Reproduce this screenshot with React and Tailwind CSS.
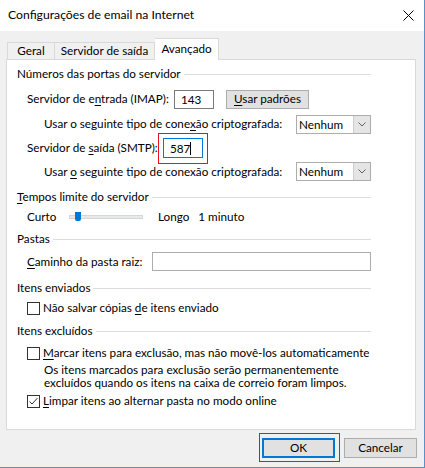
import React from 'react';

const font = { fontFamily: 'Lato, "Noto Sans", sans-serif' };

const U = ({ children }) => <span className="underline underline-offset-2">{children}</span>;

const GroupHeading = ({ children, className = '' }) => (
  <div className={`flex items-center h-[20px] pl-[10px] pr-[44px] ${className}`}>
    <span className="whitespace-nowrap">{children}</span>
    <div className="flex-1 ml-[3px] h-px bg-[#dcdcdc]" />
  </div>
);

const Select = () => (
  <div className="flex w-[75px] h-[19px] border border-[#adadad] bg-white shrink-0">
    <span className="flex-1 pl-[2px] leading-[17px]">Nenhum</span>
    <div className="w-[17px] h-full bg-[#e5e5e5] border-l border-[#cfcfcf] flex items-center justify-center">
      <svg width="8" height="5" viewBox="0 0 8 5">
        <path d="M0.5 0.5 L4 4 L7.5 0.5" fill="none" stroke="#606060" strokeWidth="1" />
      </svg>
    </div>
  </div>
);

const Checkbox = ({ checked }) => (
  <div className="w-[13px] h-[13px] border border-[#333] bg-white flex items-center justify-center shrink-0">
    {checked && (
      <svg width="11" height="11" viewBox="0 0 11 11">
        <path d="M1.5 5.5 L4 8 L9.5 2" fill="none" stroke="#333" strokeWidth="1" />
      </svg>
    )}
  </div>
);

export default function App() {
  return (
    <div className="w-[425px] h-[468px] bg-[#f0f0f0] border-r border-b border-[#5b8fc7] flex flex-col text-[11.7px] text-black whitespace-nowrap" style={font}>
      {/* Title bar */}
      <div className="h-[31px] bg-white flex items-center justify-between pl-[8px] pr-[10px] shrink-0">
        <span className="text-[12.2px]">Configurações de email na Internet</span>
        <svg width="11" height="11" viewBox="0 0 11 11">
          <path d="M0.5 0.5 L10.5 10.5 M10.5 0.5 L0.5 10.5" stroke="#000" strokeWidth="1" />
        </svg>
      </div>

      {/* Tabs */}
      <div className="flex items-end pl-[7px] mt-[7px] h-[21px] relative z-10">
        <div className="w-[48px] h-[17px] border border-b-0 border-[#d9d9d9] bg-[#f0f0f0] flex items-center justify-center">Geral</div>
        <div className="w-[100px] h-[17px] border border-l-0 border-b-0 border-[#d9d9d9] bg-[#f0f0f0] flex items-center justify-center">Servidor de saída</div>
        <div className="w-[64px] h-[22px] -mb-px border border-l-0 border-b-0 border-[#d9d9d9] bg-white flex items-start justify-center pt-[1px]">Avançado</div>
      </div>

      {/* Panel */}
      <div className="ml-[6px] w-[410px] h-[371px] bg-white border border-[#d9d9d9] flex flex-col pt-[4px]">
        <GroupHeading>Números das portas do servidor</GroupHeading>

        <div className="flex items-center h-[30px] pl-[20px]">
          <span className="w-[147px]">Servidor de e<U>n</U>trada (IMAP):</span>
          <div className="w-[40px] h-[19px] border border-[#7a7a7a] pl-[6px] leading-[17px]">143</div>
          <div className="ml-[12px] w-[83px] h-[19px] border border-[#adadad] bg-[#e1e1e1] flex items-center justify-center">
            <span><U>U</U>sar padrões</span>
          </div>
        </div>

        <div className="flex items-center h-[20px] pl-[37px]">
          <span className="w-[252px]">Usar o seguinte tipo de cone<U>x</U>ão criptografada:</span>
          <Select />
        </div>

        <div className="flex items-center h-[28px] pl-[20px]">
          <span className="w-[136px]">Servidor de <U>s</U>aída (SMTP):</span>
          <div className="relative">
            <div className="w-[40px] h-[20px] border border-[#0078d7] pl-[6px] leading-[18px] flex items-center">
              587<span className="inline-block w-px h-[13px] bg-black" />
            </div>
            <div className="absolute -left-[5px] -top-[5px] -right-[5px] -bottom-[6px] border border-[#e81123]" />
          </div>
        </div>

        <div className="flex items-center h-[19px] pl-[37px]">
          <span className="w-[252px]">Usar <U>o</U> seguinte tipo de conexão criptografada:</span>
          <Select />
        </div>

        <GroupHeading className="mt-[6px]"><U>T</U>empos limite do servidor</GroupHeading>

        <div className="flex items-center h-[20px] pl-[20px]">
          <span className="w-[42px]">Curto</span>
          <div className="relative w-[74px] h-[4px] bg-[#e7eaea] border border-[#d6d6d6]">
            <div className="absolute left-[5px] -top-[4px] w-[6px] h-[9px] bg-[#0078d7] rounded-b-[2px]" />
          </div>
          <span className="ml-[15px]">Longo</span>
          <span className="ml-[9px]">1 minuto</span>
        </div>

        <GroupHeading className="mt-[2px]">Pastas</GroupHeading>

        <div className="flex items-center h-[19px] mt-[3px] pl-[20px]">
          <span className="w-[125px]"><U>C</U>aminho da pasta raiz:</span>
          <div className="w-[219px] h-[19px] border border-[#adadad]" />
        </div>

        <GroupHeading className="mt-[7px]">Itens enviados</GroupHeading>

        <div className="flex items-center h-[20px] pl-[20px] gap-[3px]">
          <Checkbox />
          <span>Não salvar cópias <U>d</U>e itens enviado</span>
        </div>

        <GroupHeading className="mt-[3px]">Itens excluídos</GroupHeading>

        <div className="flex items-center h-[20px] mt-[2px] pl-[20px] gap-[3px]">
          <Checkbox />
          <span><U>M</U>arcar itens para exclusão, mas não movê-los automaticamente</span>
        </div>

        <div className="pl-[37px] leading-[13px]">
          <div>Os itens marcados para exclusão serão permanentemente</div>
          <div>excluídos quando os itens na caixa de correio foram limpos.</div>
        </div>

        <div className="flex items-center h-[20px] mt-[2px] pl-[20px] gap-[3px]">
          <Checkbox checked />
          <span><U>L</U>impar itens ao alternar pasta no modo online</span>
        </div>
      </div>

      {/* Buttons */}
      <div className="flex justify-end pr-[7px] mt-[8px] gap-[9px]">
        <div className="relative">
          <div className="w-[73px] h-[20px] border-2 border-[#0078d7] bg-[#e1e1e1] flex items-center justify-center">OK</div>
          <div className="absolute -left-[3px] -top-[5px] -right-[5px] -bottom-[4px] border border-[#e81123]" />
        </div>
        <div className="w-[73px] h-[20px] border border-[#adadad] bg-[#e1e1e1] flex items-center justify-center">Cancelar</div>
      </div>
    </div>
  );
}
